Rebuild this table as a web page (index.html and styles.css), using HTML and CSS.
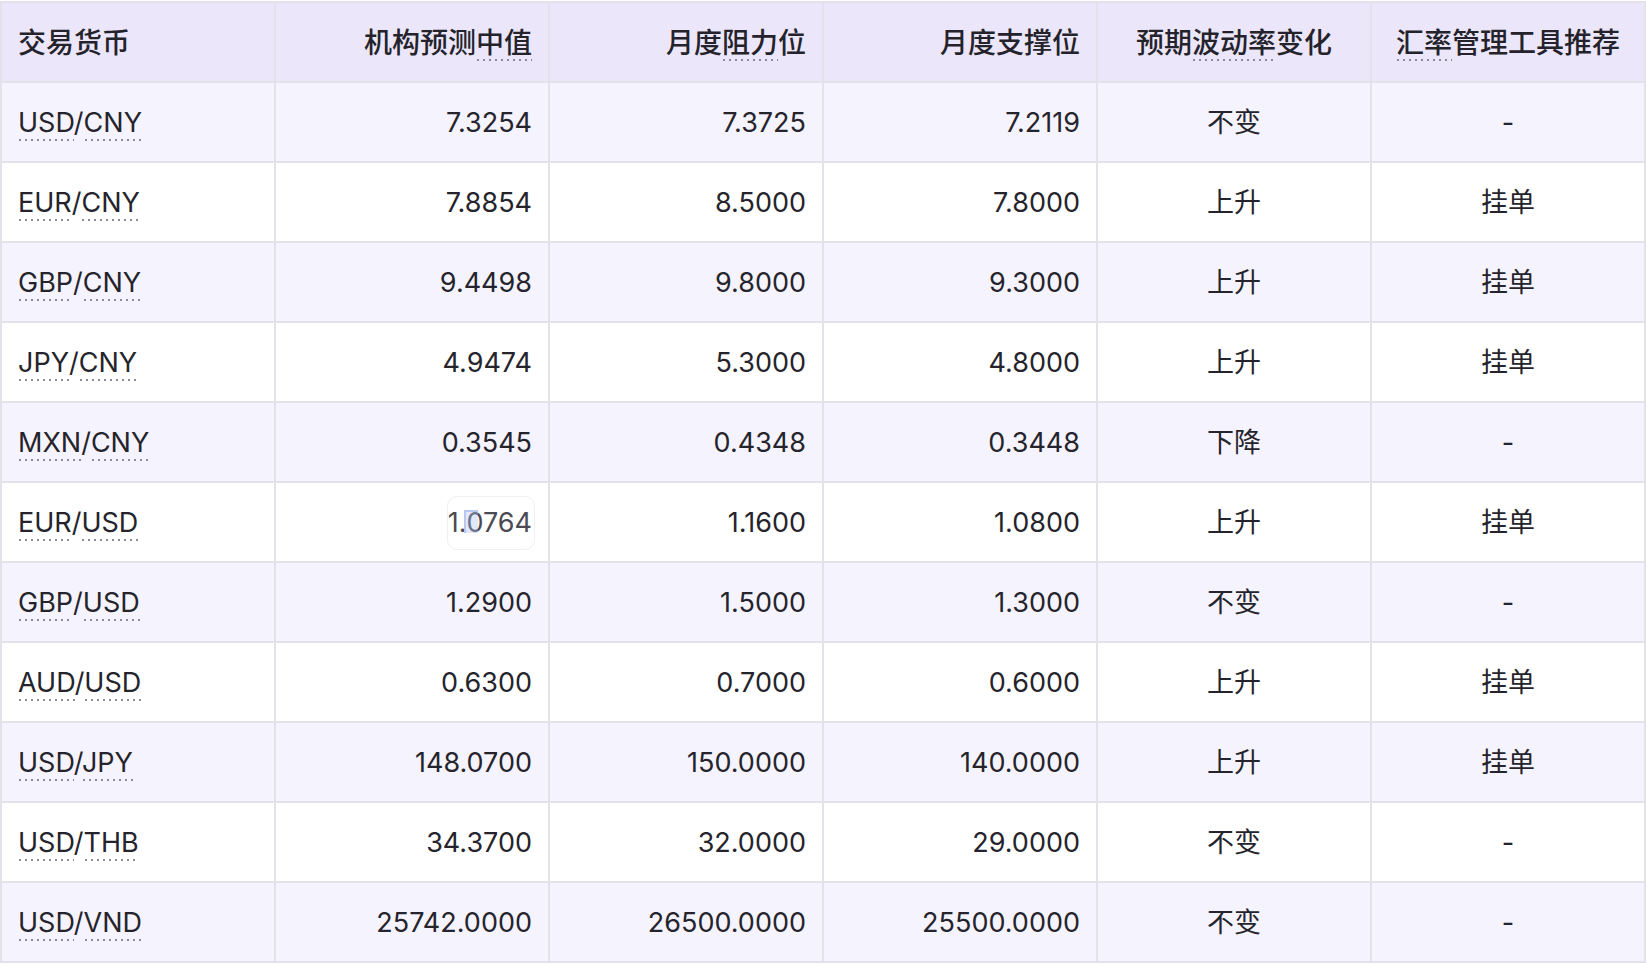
FILE: index.html
```html
<!DOCTYPE html>
<html lang="zh-CN">
<head>
<meta charset="utf-8">
<title>汇率预测</title>
<link rel="stylesheet" href="styles.css">
</head>
<body>
<table class="fx-table">
  <thead>
    <tr>
      <th class="left">交易货币</th>
      <th class="right">机构预测<span class="tip hd">中值</span></th>
      <th class="right">月度<span class="tip hd">阻力</span>位</th>
      <th class="right">月度支撑位</th>
      <th class="center">预期<span class="tip hd">波动率</span>变化</th>
      <th class="center"><span class="tip hd">汇率</span>管理工具推荐</th>
    </tr>
  </thead>
  <tbody>
    <tr class="odd"><td class="left"><span class="tip">USD</span>/<span class="tip">CNY</span></td><td class="right">7.3254</td><td class="right">7.3725</td><td class="right">7.2119</td><td class="center">不变</td><td class="center">-</td></tr>
    <tr><td class="left"><span class="tip">EUR</span>/<span class="tip">CNY</span></td><td class="right">7.8854</td><td class="right">8.5000</td><td class="right">7.8000</td><td class="center">上升</td><td class="center">挂单</td></tr>
    <tr class="odd"><td class="left"><span class="tip">GBP</span>/<span class="tip">CNY</span></td><td class="right">9.4498</td><td class="right">9.8000</td><td class="right">9.3000</td><td class="center">上升</td><td class="center">挂单</td></tr>
    <tr><td class="left"><span class="tip">JPY</span>/<span class="tip">CNY</span></td><td class="right">4.9474</td><td class="right">5.3000</td><td class="right">4.8000</td><td class="center">上升</td><td class="center">挂单</td></tr>
    <tr class="odd"><td class="left"><span class="tip">MXN</span>/<span class="tip">CNY</span></td><td class="right">0.3545</td><td class="right">0.4348</td><td class="right">0.3448</td><td class="center">下降</td><td class="center">-</td></tr>
    <tr><td class="left"><span class="tip">EUR</span>/<span class="tip">USD</span></td><td class="right"><span class="hover-box">1.<span class="sel">0</span>764</span></td><td class="right">1.1600</td><td class="right">1.0800</td><td class="center">上升</td><td class="center">挂单</td></tr>
    <tr class="odd"><td class="left"><span class="tip">GBP</span>/<span class="tip">USD</span></td><td class="right">1.2900</td><td class="right">1.5000</td><td class="right">1.3000</td><td class="center">不变</td><td class="center">-</td></tr>
    <tr><td class="left"><span class="tip">AUD</span>/<span class="tip">USD</span></td><td class="right">0.6300</td><td class="right">0.7000</td><td class="right">0.6000</td><td class="center">上升</td><td class="center">挂单</td></tr>
    <tr class="odd"><td class="left"><span class="tip">USD</span>/<span class="tip">JPY</span></td><td class="right">148.0700</td><td class="right">150.0000</td><td class="right">140.0000</td><td class="center">上升</td><td class="center">挂单</td></tr>
    <tr><td class="left"><span class="tip">USD</span>/<span class="tip">THB</span></td><td class="right">34.3700</td><td class="right">32.0000</td><td class="right">29.0000</td><td class="center">不变</td><td class="center">-</td></tr>
    <tr class="odd"><td class="left"><span class="tip">USD</span>/<span class="tip">VND</span></td><td class="right">25742.0000</td><td class="right">26500.0000</td><td class="right">25500.0000</td><td class="center">不变</td><td class="center">-</td></tr>
  </tbody>
</table>
</body>
</html>
```
FILE: styles.css
```css
html, body {
  margin: 0;
  padding: 0;
  background: #ffffff;
}

body {
  padding-top: 1px;
  font-family: "Inter", "Noto Sans CJK SC", sans-serif;
  color: #25242c;
}

.fx-table {
  width: 1646px;
  table-layout: fixed;
  border-collapse: separate;
  border-spacing: 0;
  border-top: 2px solid #e3e1e9;
  border-left: 2px solid #e3e1e9;
}

.fx-table th,
.fx-table td {
  box-sizing: border-box;
  height: 80px;
  padding: 0 16px;
  border-right: 2px solid #e3e1e9;
  border-bottom: 2px solid #e3e1e9;
  line-height: 1.2;
  white-space: nowrap;
  vertical-align: middle;
}

.fx-table th {
  background: #ebe6f9;
  font-size: 28px;
  font-weight: 500;
  color: #24232b;
  padding-top: 4px;
}

.fx-table td {
  font-size: 27px;
  font-weight: 400;
  padding-top: 2px;
}

.fx-table tr.odd td {
  background: #f5f3fe;
}

.left { text-align: left; }
.right { text-align: right; }
.center { text-align: center; }

.tip {
  padding-bottom: 2px;
  background-image: linear-gradient(to right, #8d8c98 0, #8d8c98 2px, transparent 2px);
  background-size: 6px 2px;
  background-repeat: repeat-x;
  background-position: 1px 100%;
}

.tip.hd {
  padding-bottom: 1px;
  background-position: 1px 100%;
}

.hover-box {
  position: relative;
  display: inline-block;
  padding: 10px 2px 10px 0;
  margin-right: -3px;
  border: 1px solid #f0eff2;
  border-radius: 10px;
  background: #ffffff;
  color: #4b4a52;
  line-height: 1.2;
}

.sel {
  position: relative;
}

.sel::before {
  content: "";
  position: absolute;
  left: -2px;
  top: 4px;
  width: 12px;
  height: 21px;
  border-top: 2px solid #b7c7f3;
  border-left: 2px solid #b7c7f3;
  background: rgba(170, 190, 240, 0.35);
}
```
